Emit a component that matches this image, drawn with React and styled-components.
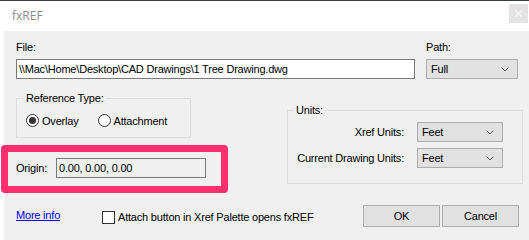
import React from "react";
import styled, { createGlobalStyle } from "styled-components";

const Global = createGlobalStyle`
  html, body { margin: 0; padding: 0; background: #ffffff; }
  body { width: 529px; height: 240px; overflow: hidden; }
  * { box-sizing: border-box; }
`;

const Window = styled.div`
  width: 529px;
  height: 240px;
  border-top: 1px solid #3b3f46;
  display: flex;
  flex-direction: column;
  font-family: "Liberation Sans", Arial, sans-serif;
  font-size: 11px;
  letter-spacing: -0.2px;
  color: #000;
`;

const TitleBar = styled.div`
  height: 30px;
  display: flex;
  align-items: center;
  justify-content: space-between;
  padding-left: 12px;
  background: #fff;
`;

const Title = styled.span`
  font-family: "Open Sans", "Noto Sans", sans-serif;
  font-size: 12px;
  letter-spacing: 0;
  color: #8c8c8c;
  margin-top: -2px;
`;

const CloseBox = styled.div`
  width: 19px;
  height: 19px;
  margin-right: 1px;
  margin-top: -6px;
  background: #e3e3e3;
  display: flex;
  align-items: center;
  justify-content: center;
`;

const Body = styled.div`
  flex: 1;
  margin-left: 4px;
  background: #f0f0f0;
  padding: 9px 0 0 12px;
  display: flex;
  flex-direction: column;
`;

const TopRow = styled.div`
  display: flex;
  gap: 11px;
`;

const Field = styled.div`
  display: flex;
  flex-direction: column;
  width: ${(p) => p.$w}px;
`;

const Label = styled.div`
  line-height: 14px;
  height: 14px;
  margin-bottom: 5px;
  white-space: nowrap;
`;

const TextBox = styled.div`
  height: 20px;
  width: ${(p) => (p.$w ? `${p.$w}px` : "100%")};
  border: 1px solid #7a7a7a;
  background: ${(p) => (p.$readonly ? "#f0f0f0" : "#ffffff")};
  padding: 0 2px;
  line-height: 18px;
  white-space: nowrap;
  overflow: hidden;
`;

const Select = styled.div`
  height: 20px;
  width: ${(p) => p.$w}px;
  border: 1px solid #adadad;
  background: #e1e1e1;
  display: flex;
  align-items: center;
  justify-content: space-between;
  padding: 0 8px 0 4px;
`;

const MidRow = styled.div`
  display: flex;
  margin-top: 12px;
  align-items: flex-start;
`;

const LeftCol = styled.div`
  display: flex;
  flex-direction: column;
  width: 212px;
`;

const Group = styled.fieldset`
  margin: 0;
  border: 1px solid #dcdcdc;
  width: ${(p) => p.$w}px;
  padding: ${(p) => p.$pad};
  min-width: 0;
`;

const UnitsGroup = styled(Group)`
  margin-left: 59px;
  margin-top: 12px;
`;

const Legend = styled.legend`
  padding: 0 2px;
  margin-left: ${(p) => p.$ml}px;
  line-height: 14px;
`;

const RadioRow = styled.div`
  display: flex;
  align-items: center;
  gap: 19px;
  height: 13px;
`;

const RadioItem = styled.label`
  display: flex;
  align-items: center;
  gap: 3px;
`;

const RadioCircle = styled.span`
  width: 13px;
  height: 13px;
  border-radius: 50%;
  border: 1px solid #333;
  background: #fff;
  display: flex;
  align-items: center;
  justify-content: center;
  &::after {
    content: "";
    width: 7px;
    height: 7px;
    border-radius: 50%;
    background: ${(p) => (p.$on ? "#333" : "transparent")};
  }
`;

const Highlight = styled.div`
  margin-top: 7px;
  margin-left: -15px;
  width: 227px;
  border: 7px solid #ff2e6e;
  border-radius: 4px;
  padding: 6px 15px 8px 8px;
  display: flex;
  align-items: center;
  justify-content: space-between;
`;

const UnitsGrid = styled.div`
  display: grid;
  grid-template-columns: auto 86px;
  column-gap: 13px;
  row-gap: 6px;
  align-items: center;
  justify-items: end;
  white-space: nowrap;
`;

const Footer = styled.div`
  display: flex;
  align-items: center;
  margin-top: 12px;
  height: 22px;
`;

const Link = styled.a`
  color: #0000ff;
  text-decoration: underline;
  width: 86px;
  margin-top: -2px;
`;

const Check = styled.label`
  display: flex;
  align-items: center;
  gap: 3px;
  margin-top: 2px;
  white-space: nowrap;
`;

const CheckBox = styled.span`
  width: 13px;
  height: 13px;
  border: 1px solid #333;
  background: #fff;
`;

const Buttons = styled.div`
  display: flex;
  gap: 2px;
  margin-left: auto;
  margin-right: 10px;
`;

const Button = styled.div`
  width: 77px;
  height: 22px;
  border: 1px solid #adadad;
  background: #e1e1e1;
  display: flex;
  align-items: center;
  justify-content: center;
`;

const Chevron = () => (
  <svg width="8" height="5" viewBox="0 0 8 5">
    <path d="M0.5 0.5 L4 4 L7.5 0.5" fill="none" stroke="#606060" strokeWidth="1" />
  </svg>
);

export default function App() {
  return (
    <>
      <Global />
      <Window>
        <TitleBar>
          <Title>fxREF</Title>
          <CloseBox>
            <svg width="7" height="7" viewBox="0 0 7 7">
              <path d="M0 0 L7 7 M7 0 L0 7" stroke="#f7f7f7" strokeWidth="1.3" />
            </svg>
          </CloseBox>
        </TitleBar>
        <Body>
          <TopRow>
            <Field $w={399}>
              <Label>File:</Label>
              <TextBox>\\Mac\Home\Desktop\CAD Drawings\1 Tree Drawing.dwg</TextBox>
            </Field>
            <Field $w={92}>
              <Label>Path:</Label>
              <Select $w={92}>
                <span>Full</span>
                <Chevron />
              </Select>
            </Field>
          </TopRow>
          <MidRow>
            <LeftCol>
              <Group $w={175} $pad="9px 0 10px 9px">
                <Legend $ml={-2}>Reference Type:</Legend>
                <RadioRow>
                  <RadioItem>
                    <RadioCircle $on />
                    <span>Overlay</span>
                  </RadioItem>
                  <RadioItem>
                    <RadioCircle />
                    <span>Attachment</span>
                  </RadioItem>
                </RadioRow>
              </Group>
              <Highlight>
                <span>Origin:</span>
                <TextBox $w={150} $readonly>0.00, 0.00, 0.00</TextBox>
              </Highlight>
            </LeftCol>
            <UnitsGroup $w={236} $pad="5px 19px 15px 9px">
              <Legend $ml={-3}>Units:</Legend>
              <UnitsGrid>
                <span>Xref Units:</span>
                <Select $w={86}>
                  <span>Feet</span>
                  <Chevron />
                </Select>
                <span>Current Drawing Units:</span>
                <Select $w={86}>
                  <span>Feet</span>
                  <Chevron />
                </Select>
              </UnitsGrid>
            </UnitsGroup>
          </MidRow>
          <Footer>
            <Link href="#">More info</Link>
            <Check>
              <CheckBox />
              <span>Attach button in Xref Palette opens fxREF</span>
            </Check>
            <Buttons>
              <Button>OK</Button>
              <Button>Cancel</Button>
            </Buttons>
          </Footer>
        </Body>
      </Window>
    </>
  );
}
